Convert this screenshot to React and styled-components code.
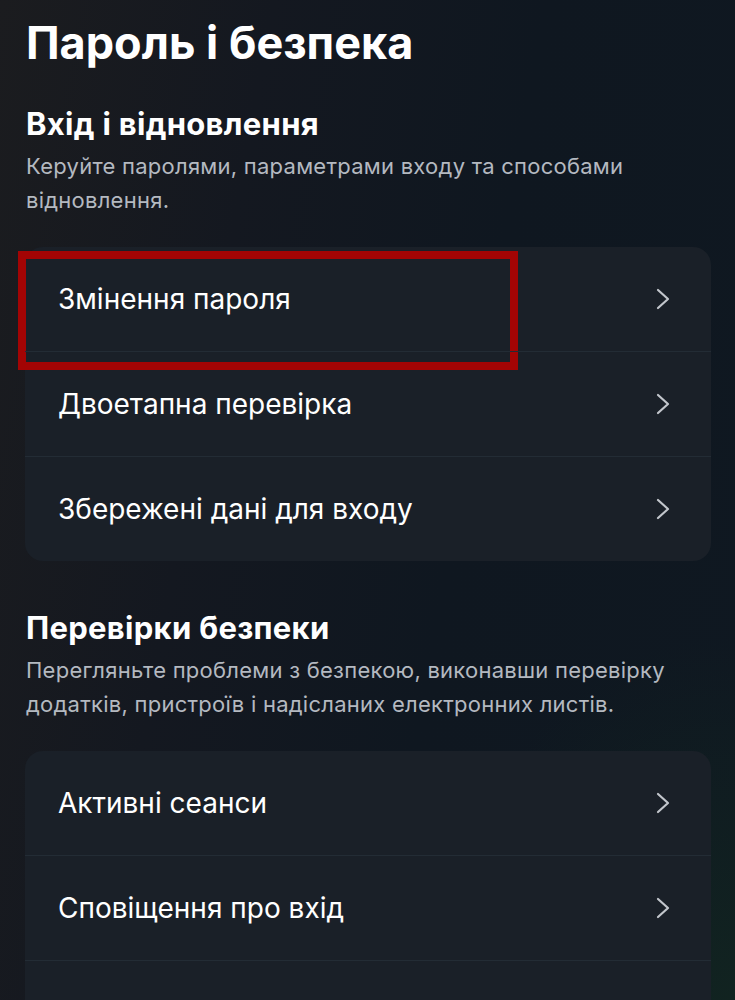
import React from 'react';
import styled, { createGlobalStyle } from 'styled-components';

const GlobalStyle = createGlobalStyle`
  html, body {
    margin: 0;
    padding: 0;
    min-height: 100%;
    background-color: #111820;
  }

  body {
    font-family: Inter, "Noto Sans", "Liberation Sans", sans-serif;
    color: #ffffff;
    -webkit-font-smoothing: antialiased;
  }
`;

// the last row of the second card runs past the bottom of the screen
const sections = [
  {
    title: 'Вхід і відновлення',
    text: 'Керуйте паролями, параметрами входу та способами відновлення.',
    items: ['Змінення пароля', 'Двоетапна перевірка', 'Збережені дані для входу'],
    highlight: 0,
  },
  {
    title: 'Перевірки безпеки',
    text: 'Перегляньте проблеми з безпекою, виконавши перевірку додатків, пристроїв і надісланих електронних листів.',
    items: ['Активні сеанси', 'Сповіщення про вхід', ''],
  },
];

const Chevron = () => (
  <ChevronIcon viewBox="0 0 14 22" fill="none">
    <path d="M2 2 L12 11 L2 20" stroke="currentColor" strokeWidth="2.2" strokeLinecap="round" strokeLinejoin="round" />
  </ChevronIcon>
);

const App = () => {
  return (
    <>
      <GlobalStyle />
      <Screen>
        <Page>
          <Title>Пароль і безпека</Title>
          {sections.map((section) => (
            <Section key={section.title}>
              <SectionTitle>{section.title}</SectionTitle>
              <SectionText>{section.text}</SectionText>
              <Card>
                {section.items.map((item, i) => (
                  <Row key={i}>
                    {item && <RowLabel>{item}</RowLabel>}
                    {item && <Chevron />}
                    {section.highlight === i && <Highlight />}
                  </Row>
                ))}
              </Card>
            </Section>
          ))}
        </Page>
      </Screen>
    </>
  );
};

const Screen = styled.div`
  height: 1000px;
  overflow: hidden;
  background:
    radial-gradient(ellipse 420px 520px at 100% 100%, rgba(18, 40, 32, 0.7), rgba(18, 40, 32, 0) 70%),
    linear-gradient(100deg, #1b1c1f 0%, #141820 30%, #0f1720 60%, #0f1821 100%);
`;

const Page = styled.main`
  display: flex;
  flex-direction: column;
  padding: 15px 24px 0 26px;
`;

const Title = styled.h1`
  margin: 0 0 34px;
  font-size: 45px;
  line-height: 56px;
  font-weight: 700;
`;

const Section = styled.section`
  display: flex;
  flex-direction: column;
  margin-bottom: 48px;
`;

const SectionTitle = styled.h2`
  margin: 0 0 6px;
  font-size: 31px;
  line-height: 38px;
  font-weight: 700;
  letter-spacing: 0.3px;
`;

const SectionText = styled.p`
  margin: 0 0 30px;
  font-size: 22px;
  line-height: 34px;
  font-weight: 400;
  letter-spacing: 0.25px;
  color: #b4b9c0;
`;

const Card = styled.div`
  display: flex;
  flex-direction: column;
  margin-left: -1px;
  border-radius: 18px;
  background-color: #1a2028;
`;

const Row = styled.div`
  position: relative;
  display: flex;
  align-items: center;
  justify-content: space-between;
  height: 104px;
  padding: 0 41px 0 33px;

  & + & {
    border-top: 1px solid #232c35;
  }
`;

const RowLabel = styled.span`
  font-size: 28px;
  font-weight: 400;
  color: #ffffff;
`;

const ChevronIcon = styled.svg`
  width: 14px;
  height: 22px;
  color: #c2c6cc;
  flex-shrink: 0;
`;

const Highlight = styled.div`
  position: absolute;
  left: -7px;
  top: 4px;
  width: 500px;
  height: 119px;
  box-sizing: border-box;
  border: 8px solid #a30404;
  pointer-events: none;
`;

export default App;
